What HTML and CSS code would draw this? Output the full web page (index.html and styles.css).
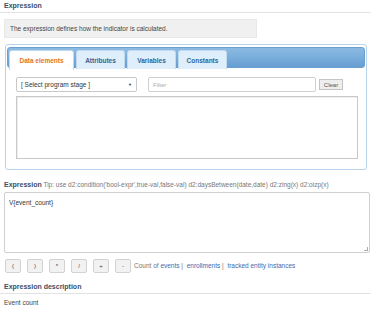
FILE: index.html
```html
<!DOCTYPE html>
<html lang="en">
  <head>
    <meta name="viewport" content="width=device-width, initial-scale=1.0" />
    <title>Expression</title>
    <link rel="stylesheet" href="styles.css">
  </head>
  <body>
    <div class="section-title">Expression</div>
    <div class="info">The expression defines how the indicator is calculated.</div>

    <div class="tabs">
      <ul class="tab-nav">
        <li class="tab active">Data elements</li>
        <li class="tab">Attributes</li>
        <li class="tab">Variables</li>
        <li class="tab">Constants</li>
      </ul>
      <div class="tab-panel">
        <div class="filter-row">
          <div class="select">[ Select program stage ]<span class="caret">&#9660;</span></div>
          <div class="filter">Filter</div>
          <button class="btn-clear">Clear</button>
        </div>
        <div class="listbox"></div>
      </div>
    </div>

    <div class="expr-label"><b>Expression</b> Tip: use d2:condition('bool-expr',true-val,false-val) d2:daysBetween(date,date) d2:zing(x) d2:oizp(x)</div>
    <div class="expr-box">V{event_count}<span class="grip"></span></div>

    <div class="ops">
      <button class="op">(</button>
      <button class="op">)</button>
      <button class="op">*</button>
      <button class="op">/</button>
      <button class="op">+</button>
      <button class="op">-</button>
      <span class="count-of">Count of <a>events</a> | &nbsp;<a>enrollments</a> | &nbsp;<a>tracked entity instances</a></span>
    </div>

    <div class="section-title desc-title">Expression description</div>
    <div class="desc">Event count</div>
  </body>
</html>
```
FILE: styles.css
```css
* {
  padding: 0;
  margin: 0;
  box-sizing: border-box;
  font-family: "Liberation Sans", Arial, sans-serif;
}
body {
  background-color: #fff;
  color: #555;
  font-size: 6.5px;
  width: 371px;
  height: 322px;
  overflow: hidden;
}
.section-title {
  font-size: 7px;
  font-weight: bold;
  color: #3c4f66;
  padding: 2px 0 3px 4px;
  height: 13px;
  border-bottom: 1px solid #e2e2e2;
}
.info {
  margin: 6px 0 0 4px;
  width: 253px;
  height: 19px;
  background-color: #f0f0f0;
  border: 1px solid #e8e8e8;
  padding: 0 5px;
  display: flex;
  align-items: center;
  color: #444;
}
.tabs {
  margin: 6px 0 0 5px;
  width: 362px;
  height: 126px;
  border: 1px solid #b8d4ec;
  border-radius: 3px;
  padding: 2px 1px;
}
.tab-nav {
  list-style: none;
  display: flex;
  gap: 2px;
  height: 21px;
  padding: 2px 0 0 1px;
  background: linear-gradient(#8bbbe3, #679fd2);
  border: 1px solid #6aa0d0;
  border-radius: 3px;
}
.tab {
  width: 49px;
  height: 19px;
  background-color: #dfeefb;
  border: 1px solid #c3d9ee;
  border-bottom: none;
  border-radius: 3px 3px 0 0;
  color: #2e6596;
  font-weight: bold;
  font-size: 6.5px;
  display: flex;
  align-items: center;
  justify-content: center;
}
.tab.active {
  width: 65px;
  height: 20px;
  background-color: #fff;
  color: #e0761f;
}
.tab-panel {
  padding: 9px 8px 0 9px;
}
.filter-row {
  display: flex;
  align-items: center;
  height: 15px;
}
.select {
  width: 121px;
  height: 15px;
  border: 1px solid #c8c8c8;
  border-radius: 2px;
  padding: 0 4px;
  display: flex;
  align-items: center;
  justify-content: space-between;
  color: #333;
}
.caret {
  font-size: 4px;
  color: #333;
}
.filter {
  margin-left: 11px;
  width: 168px;
  height: 15px;
  border: 1px solid #cfcfcf;
  border-radius: 2px;
  padding: 0 4px;
  display: flex;
  align-items: center;
  color: #aaa;
  font-size: 6px;
}
.btn-clear {
  margin-left: 3px;
  width: 24px;
  height: 11px;
  border: 1px solid #c4c4c4;
  background-color: #eee;
  color: #555;
  font-size: 6px;
}
.listbox {
  margin-top: 4px;
  width: 342px;
  height: 63px;
  border: 1px solid #c8c8c8;
  box-shadow: inset 1px 1px 1px #eee;
}
.expr-label {
  margin: 11px 0 0 4px;
  color: #777;
  white-space: nowrap;
}
.expr-label b {
  color: #3c4f66;
  font-size: 7px;
}
.expr-box {
  position: relative;
  margin: 4px 0 0 4px;
  width: 366px;
  height: 61px;
  border: 1px solid #cfcfcf;
  border-radius: 2px;
  padding: 6px 4px;
  color: #333;
}
.grip {
  position: absolute;
  right: 1px;
  bottom: 1px;
  width: 4px;
  height: 4px;
  border-right: 1px solid #aaa;
  border-bottom: 1px solid #aaa;
}
.ops {
  display: flex;
  align-items: center;
  gap: 6px;
  margin: 5px 0 0 5px;
  height: 15px;
}
.op {
  width: 16px;
  height: 14px;
  border: 1px solid #d2d2d2;
  border-radius: 2px;
  background-color: #f2f2f2;
  color: #444;
  font-size: 6px;
}
.count-of {
  margin-left: -3px;
  color: #777;
  font-size: 6.5px;
}
.count-of a {
  color: #3e6ab0;
}
.desc-title {
  margin-top: 8px;
}
.desc {
  padding: 5px 0 0 4px;
  color: #444;
}
```
